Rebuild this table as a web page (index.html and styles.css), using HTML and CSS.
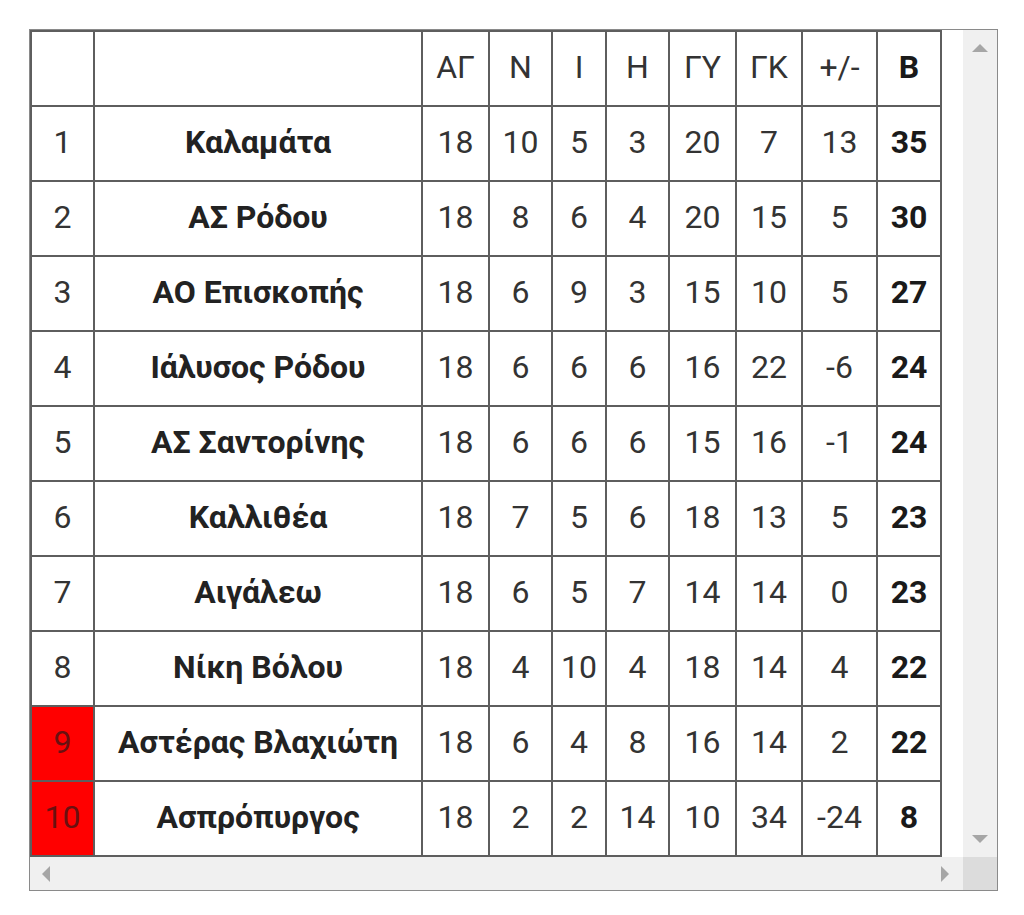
FILE: index.html
```html
<!DOCTYPE html>
<html lang="el">
<head>
<meta charset="utf-8">
<title>Βαθμολογία</title>
<link rel="stylesheet" href="styles.css">
</head>
<body>
<div class="page">
  <div class="scrollbox">
    <div class="viewport">
      <table class="standings">
        <colgroup>
          <col class="c-pos"><col class="c-team"><col class="c-ag"><col class="c-n"><col class="c-i"><col class="c-h"><col class="c-gy"><col class="c-gk"><col class="c-diff"><col class="c-pts">
        </colgroup>
        <thead>
          <tr><th></th><th></th><th>ΑΓ</th><th>Ν</th><th>Ι</th><th>Η</th><th>ΓΥ</th><th>ΓΚ</th><th>+/-</th><th class="pts">Β</th></tr>
        </thead>
        <tbody>
          <tr><td>1</td><td class="team">Καλαμάτα</td><td>18</td><td>10</td><td>5</td><td>3</td><td>20</td><td>7</td><td>13</td><td class="pts">35</td></tr>
          <tr><td>2</td><td class="team">ΑΣ Ρόδου</td><td>18</td><td>8</td><td>6</td><td>4</td><td>20</td><td>15</td><td>5</td><td class="pts">30</td></tr>
          <tr><td>3</td><td class="team">ΑΟ Επισκοπής</td><td>18</td><td>6</td><td>9</td><td>3</td><td>15</td><td>10</td><td>5</td><td class="pts">27</td></tr>
          <tr><td>4</td><td class="team">Ιάλυσος Ρόδου</td><td>18</td><td>6</td><td>6</td><td>6</td><td>16</td><td>22</td><td>-6</td><td class="pts">24</td></tr>
          <tr><td>5</td><td class="team">ΑΣ Σαντορίνης</td><td>18</td><td>6</td><td>6</td><td>6</td><td>15</td><td>16</td><td>-1</td><td class="pts">24</td></tr>
          <tr><td>6</td><td class="team">Καλλιθέα</td><td>18</td><td>7</td><td>5</td><td>6</td><td>18</td><td>13</td><td>5</td><td class="pts">23</td></tr>
          <tr><td>7</td><td class="team">Αιγάλεω</td><td>18</td><td>6</td><td>5</td><td>7</td><td>14</td><td>14</td><td>0</td><td class="pts">23</td></tr>
          <tr><td>8</td><td class="team">Νίκη Βόλου</td><td>18</td><td>4</td><td>10</td><td>4</td><td>18</td><td>14</td><td>4</td><td class="pts">22</td></tr>
          <tr><td class="releg">9</td><td class="team">Αστέρας Βλαχιώτη</td><td>18</td><td>6</td><td>4</td><td>8</td><td>16</td><td>14</td><td>2</td><td class="pts">22</td></tr>
          <tr><td class="releg">10</td><td class="team">Ασπρόπυργος</td><td>18</td><td>2</td><td>2</td><td>14</td><td>10</td><td>34</td><td>-24</td><td class="pts">8</td></tr>
        </tbody>
      </table>
    </div>
    <div class="vbar">
      <span class="arrow up"></span>
      <span class="arrow down"></span>
    </div>
    <div class="hbar">
      <span class="arrow left"></span>
      <span class="arrow right"></span>
    </div>
    <div class="corner"></div>
  </div>
</div>
</body>
</html>
```

FILE: styles.css
```css
html, body {
  margin: 0;
  padding: 0;
  background: #ffffff;
}

.page {
  padding: 29px 0 0 29px;
}

.scrollbox {
  box-sizing: border-box;
  width: 969px;
  height: 862px;
  border: 1px solid #8a8a8a;
  display: grid;
  grid-template-columns: 933px 34px;
  grid-template-rows: 827px 33px;
  background: #fff;
}

.viewport {
  overflow: hidden;
}

.standings {
  border-collapse: separate;
  border-spacing: 0;
  table-layout: fixed;
  width: 912px;
  border-top: 2px solid #5e5e5e;
  border-left: 2px solid #5e5e5e;
  font-family: Roboto, "Liberation Sans", sans-serif;
  font-size: 32px;
  color: #333333;
}

.c-pos { width: 63px; }
.c-team { width: 328px; }
.c-ag { width: 67px; }
.c-n { width: 63px; }
.c-i { width: 54px; }
.c-h { width: 63px; }
.c-gy { width: 67px; }
.c-gk { width: 66px; }
.c-diff { width: 75px; }
.c-pts { width: 64px; }

.standings th,
.standings td {
  box-sizing: border-box;
  height: 75px;
  padding: 0 0 3px;
  text-align: center;
  vertical-align: middle;
  border-right: 2px solid #5e5e5e;
  border-bottom: 2px solid #5e5e5e;
  font-weight: 400;
  white-space: nowrap;
}

.standings .team {
  font-weight: 700;
  color: #222222;
}

.standings .pts {
  font-weight: 700;
  color: #1a1a1a;
}

.standings .releg {
  background: #ff0000;
  color: #6a1010;
}

.vbar {
  background: #f0f0f0;
  display: flex;
  flex-direction: column;
  justify-content: space-between;
  align-items: center;
  padding: 14px 0 14px;
}

.hbar {
  background: #f0f0f0;
  display: flex;
  justify-content: space-between;
  align-items: center;
  padding: 0 14px 0 12px;
}

.corner {
  background: #dcdcdc;
}

.arrow {
  width: 0;
  height: 0;
  display: block;
}

.arrow.up {
  border-left: 8px solid transparent;
  border-right: 8px solid transparent;
  border-bottom: 8px solid #a6a6a6;
}

.arrow.down {
  border-left: 8px solid transparent;
  border-right: 8px solid transparent;
  border-top: 8px solid #a6a6a6;
}

.arrow.left {
  border-top: 8px solid transparent;
  border-bottom: 8px solid transparent;
  border-right: 8px solid #a6a6a6;
}

.arrow.right {
  border-top: 8px solid transparent;
  border-bottom: 8px solid transparent;
  border-left: 8px solid #a6a6a6;
}
```
